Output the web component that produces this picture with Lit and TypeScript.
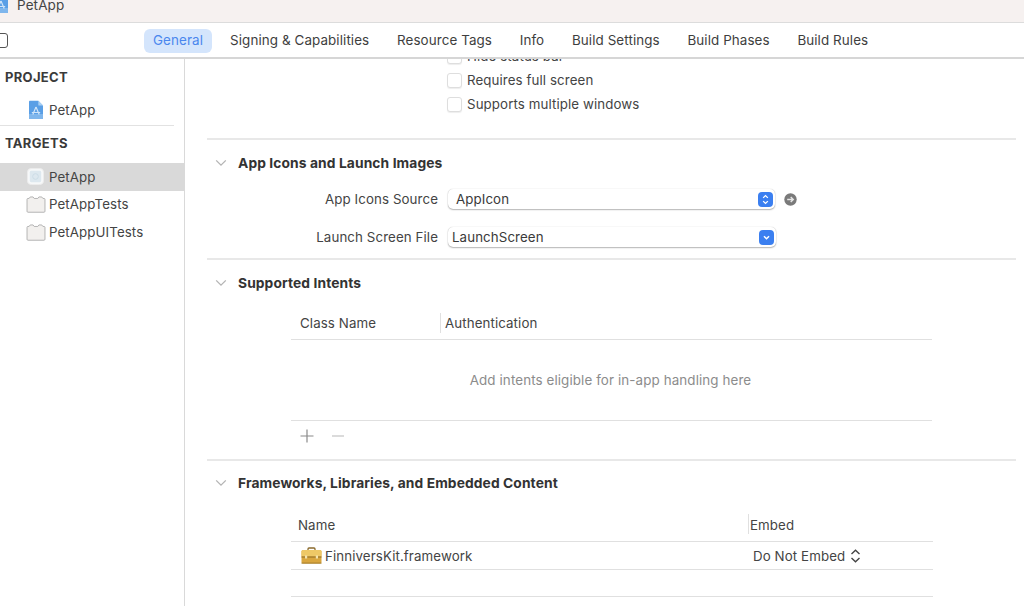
import { LitElement, html, css, svg } from "lit";
import { customElement } from "lit/decorators.js";

const chevron = html`<svg class="chev" width="12" height="8" viewBox="0 0 12 8"><path d="M1.200 1.400 6 6.200l4.800-4.800" fill="none" stroke="#b4b4b4" stroke-width="1.300"/></svg>`;
const folder = html`<svg width="20" height="17" viewBox="0 0 21 18"><path d="M1 16.200V3.600c0-.7.4-1 1-1h1.200L4.400 1h3l1.200 1.600h3.800L13.600 1h3l1.200 1.600H19c.6 0 1 .3 1 1v12.600c0 .6-.4 1-1 1H2c-.6 0-1-.4-1-1Z" fill="#f2f0ee" stroke="#a9a9a9" stroke-width=".9"/></svg>`;
const fileIcon = html`<svg width="16" height="20" viewBox="0 0 16 20"><path d="M1 1.500c0-.4.3-.7.7-.7h8.600L15 5.600v12.800c0 .4-.3.7-.7.7H1.700c-.4 0-.7-.3-.7-.7Z" fill="#5a9fe6"/><path d="M10.300.8 15 5.600h-4c-.4 0-.7-.3-.7-.7Z" fill="#a9d0f3"/><path d="M1 14h14v4.400c0 .4-.3.7-.7.7H1.700c-.4 0-.7-.3-.7-.7Z" fill="#7fb6ec"/><path d="M8 7 4.800 14.500M8 7l3.200 7.500M3.800 12.500h8.400" stroke="#cfe4f8" stroke-width="1.200" fill="none"/></svg>`;
const appIcon = html`<svg width="17" height="17" viewBox="0 0 18 18"><rect x=".5" y=".5" width="17" height="17" rx="4" fill="#f6f8f9" stroke="#ececec"/><rect x="3" y="3" width="12" height="12" rx="1.500" fill="#dde8ef"/><circle cx="9" cy="9" r="3" fill="none" stroke="#cbdbe6"/></svg>`;
const briefcase = html`<svg width="21" height="17" viewBox="0 0 21 17"><path d="M7 3.500V2c0-.6.4-1 1-1h5c.6 0 1 .4 1 1v1.500" fill="none" stroke="#8a6a2c" stroke-width="1.300"/><rect x=".5" y="3" width="20" height="13.500" rx="1.600" fill="#d9a63e"/><rect x=".5" y="3" width="20" height="6.500" rx="1.600" fill="#eec866"/><rect x=".5" y="9.500" width="20" height="1" fill="#8f6c25"/><rect x="4" y="8.500" width="2.200" height="3" fill="#f4e3ae"/><rect x="14.800" y="8.500" width="2.200" height="3" fill="#f4e3ae"/><rect x=".5" y="15.600" width="20" height="1" fill="#a37c2c"/></svg>`;
const updown = svg`<path d="M4.500 6.300 7 3.800l2.500 2.500M4.500 9.700 7 12.200l2.500-2.500" fill="none" stroke="#fff" stroke-width="1.400"/>`;
const down = svg`<path d="M4.300 6.700 7 9.400l2.700-2.700" fill="none" stroke="#fff" stroke-width="1.600"/>`;

@customElement("app-root")
export class AppRoot extends LitElement {
  static styles = css`
    :host { display: block; width: 1024px; height: 606px; overflow: hidden; background: #fff; font-family: Inter, "Liberation Sans", sans-serif; font-size: 13px; color: #3c3c3c; letter-spacing: .1px; }
    .title { height: 23px; box-sizing: border-box; background: #f6f1f0; border-bottom: 1px solid #dcdcdc; display: flex; align-items: flex-start; gap: 8px; overflow: hidden; }
    .title svg { margin-left: -7px; margin-top: -6px; flex: none; }
    .title span { font-size: 13.500px; line-height: 14px; margin-top: -2px; color: #444; }
    .tabs { height: 36px; box-sizing: border-box; border-bottom: 2px solid #d6d6d6; display: flex; align-items: center; position: relative; padding-left: 144px; background: #fff; }
    .tab { height: 24px; line-height: 22px; padding: 0 9px; margin-right: 9.700px; white-space: nowrap; font-size: 13.400px; color: #3e3e3e; margin-top: 1px; }
    .tab.on { background: #d4e5fc; color: #4a87ee; border-radius: 6px; margin-right: 9px; }
    .stub { position: absolute; left: -6px; top: 10px; width: 12px; height: 13px; border: 1px solid #555; border-radius: 3px; }
    .body { display: flex; height: 547px; }
    .side { width: 185px; flex: none; box-sizing: border-box; border-right: 1px solid #d9d9d9; padding-top: 10px; }
    .group { font-weight: 700; font-size: 13px; letter-spacing: .3px; line-height: 16px; padding-left: 5px; color: #3a3a3a; }
    .item { display: flex; align-items: center; height: 28px; box-sizing: border-box; font-size: 13.300px; color: #444; }
    .item .slot { width: 49px; flex: none; box-sizing: border-box; display: flex; justify-content: flex-end; padding-right: 3px; }
    .item .slot.file { padding-right: 5px; }
    .item .slot.app { padding-right: 5px; }
    .item.up { padding-bottom: 2px; }
    .item.sel { background: #d9d9d9; margin-top: 12px; padding-bottom: 1px; }
    .item.proj { margin-top: 11px; }
    .sideline { height: 1px; background: #e2e2e2; margin: 1px 10px 9px 0; }
    .main { flex: 1; padding: 0 8px 0 22px; overflow: hidden; }
    .checks { margin-top: -15px; padding-left: 240px; height: 94px; }
    .check { display: flex; align-items: center; gap: 5px; height: 24px; font-size: 13.300px; color: #444; }
    .box { width: 13px; height: 13px; border: 1px solid #dedede; border-radius: 3px; background: #fff; box-shadow: 0 1px 1px #eee; }
    .sep { height: 2px; background: #e8e8e8; margin-bottom: -1px; }
    .head { display: flex; align-items: center; height: 48px; box-sizing: border-box; font-weight: 700; font-size: 13.800px; color: #333; gap: 11px; padding-left: 8px; }
    .head.mid { padding-bottom: 1px; }
    .head.last { height: 46px; padding-bottom: 1px; }
    .chev { flex: none; }
    .form { display: grid; grid-template-columns: 231px 1fr; row-gap: 18px; align-items: center; padding-bottom: 11px; margin-top: 2px; }
    .label { text-align: right; font-size: 13.300px; color: #444; }
    .ctrl { display: flex; align-items: center; gap: 9px; padding-left: 10px; }
    .pop { width: 327px; height: 20px; box-sizing: border-box; border-radius: 5px; background: #fff; box-shadow: 0 0 1px rgba(0,0,0,.25), 0 1px 1.500px rgba(0,0,0,.28); display: flex; align-items: center; justify-content: space-between; padding: 0 2px 0 8px; font-size: 13.300px; color: #3a3a3a; }
    .pop.b { padding-left: 4px; width: 328px; }
    .btn { width: 15px; height: 15px; border-radius: 4px; background: #3b7ff0; display: block; }
    .tablewrap { margin-left: 84px; margin-right: 84px; }
    .tablewrap.wide { margin-right: 83px; }
    .thead { display: flex; align-items: center; height: 32px; border-bottom: 1px solid #e0e0e0; font-size: 13.300px; color: #444; }
    .thead.tall { height: 35px; }
    .th { height: 100%; display: flex; align-items: center; box-sizing: border-box; }
    .th + .th { border-left: 1px solid #e0e0e0; height: 20px; padding-left: 4px; }
    .th.cls { width: 149px; padding-left: 9px; }
    .th.nm { width: 457px; padding-left: 7px; }
    .thead.tall .th { padding-top: 3px; }
    .thead.tall .th + .th { padding-left: 1px; }
    .empty { height: 81px; border-bottom: 1px solid #e0e0e0; display: flex; align-items: center; justify-content: center; font-size: 13.400px; color: #8c8c8c; padding-right: 2px; box-sizing: border-box; }
    .tools { height: 29px; margin-bottom: 9px; display: flex; align-items: center; gap: 17px; padding-left: 9px; }
    .tools svg { flex: none; }
    .row { height: 26px; border-bottom: 1px solid #e0e0e0; display: flex; align-items: center; font-size: 13.300px; color: #444; }
    .row.first { height: 27px; }
    .fw { display: flex; align-items: center; gap: 3px; width: 452px; padding-left: 10px; }
    .emb { display: flex; align-items: center; gap: 5px; }
  `;

  private tabs = ["Signing & Capabilities", "Resource Tags", "Info", "Build Settings", "Build Phases", "Build Rules"];

  render() {
    return html`
      <div class="title">
        ${fileIcon}
        <span>PetApp</span>
      </div>
      <div class="tabs">
        <div class="stub"></div>
        <div class="tab on">General</div>
        ${this.tabs.map((t) => html`<div class="tab">${t}</div>`)}
      </div>
      <div class="body">
        <aside class="side">
          <div class="group">PROJECT</div>
          <div class="item proj"><span class="slot file">${fileIcon}</span>PetApp</div>
          <div class="sideline"></div>
          <div class="group">TARGETS</div>
          <div class="item sel"><span class="slot app">${appIcon}</span>PetApp</div>
          <div class="item up"><span class="slot">${folder}</span>PetAppTests</div>
          <div class="item up"><span class="slot">${folder}</span>PetAppUITests</div>
        </aside>
        <main class="main">
          <div class="checks">
            <div class="check"><span class="box"></span>Hide status bar</div>
            <div class="check"><span class="box"></span>Requires full screen</div>
            <div class="check"><span class="box"></span>Supports multiple windows</div>
          </div>
          <div class="sep"></div>
          <div class="head">${chevron}App Icons and Launch Images</div>
          <div class="form">
            <div class="label">App Icons Source</div>
            <div class="ctrl">
              <div class="pop">AppIcon<svg class="btn" viewBox="0 0 14 16">${updown}</svg></div>
              <svg width="13" height="13" viewBox="0 0 13 13"><circle cx="6.500" cy="6.500" r="6.200" fill="#7a7a7a"/><path d="M3.200 6.500h6M6.700 3.900l2.600 2.600-2.600 2.600" fill="none" stroke="#e6e6e6" stroke-width="1.400"/></svg>
            </div>
            <div class="label">Launch Screen File</div>
            <div class="ctrl">
              <div class="pop b">LaunchScreen<svg class="btn" viewBox="0 0 14 16">${down}</svg></div>
            </div>
          </div>
          <div class="sep"></div>
          <div class="head mid">${chevron}Supported Intents</div>
          <div class="tablewrap">
            <div class="thead">
              <div class="th cls">Class Name</div>
              <div class="th">Authentication</div>
            </div>
            <div class="empty">Add intents eligible for in-app handling here</div>
            <div class="tools">
              <svg width="14" height="14" viewBox="0 0 14 14"><path d="M7 .5v13M.5 7h13" stroke="#8a8a8a" stroke-width="1.200"/></svg>
              <svg width="14" height="14" viewBox="0 0 14 14"><path d="M1 7h12" stroke="#c4c4c4" stroke-width="1.200"/></svg>
            </div>
          </div>
          <div class="sep"></div>
          <div class="head last">${chevron}Frameworks, Libraries, and Embedded Content</div>
          <div class="tablewrap wide">
            <div class="thead tall">
              <div class="th nm">Name</div>
              <div class="th">Embed</div>
            </div>
            <div class="row first">
              <div class="fw">${briefcase}FinniversKit.framework</div>
              <div class="emb">Do Not Embed
                <svg width="11" height="14" viewBox="0 0 11 14"><path d="M1.500 5 5.500 1.300 9.500 5M1.500 9l4 3.700 4-3.700" fill="none" stroke="#444" stroke-width="1.400"/></svg>
              </div>
            </div>
            <div class="row"></div>
          </div>
        </main>
      </div>
    `;
  }
}
